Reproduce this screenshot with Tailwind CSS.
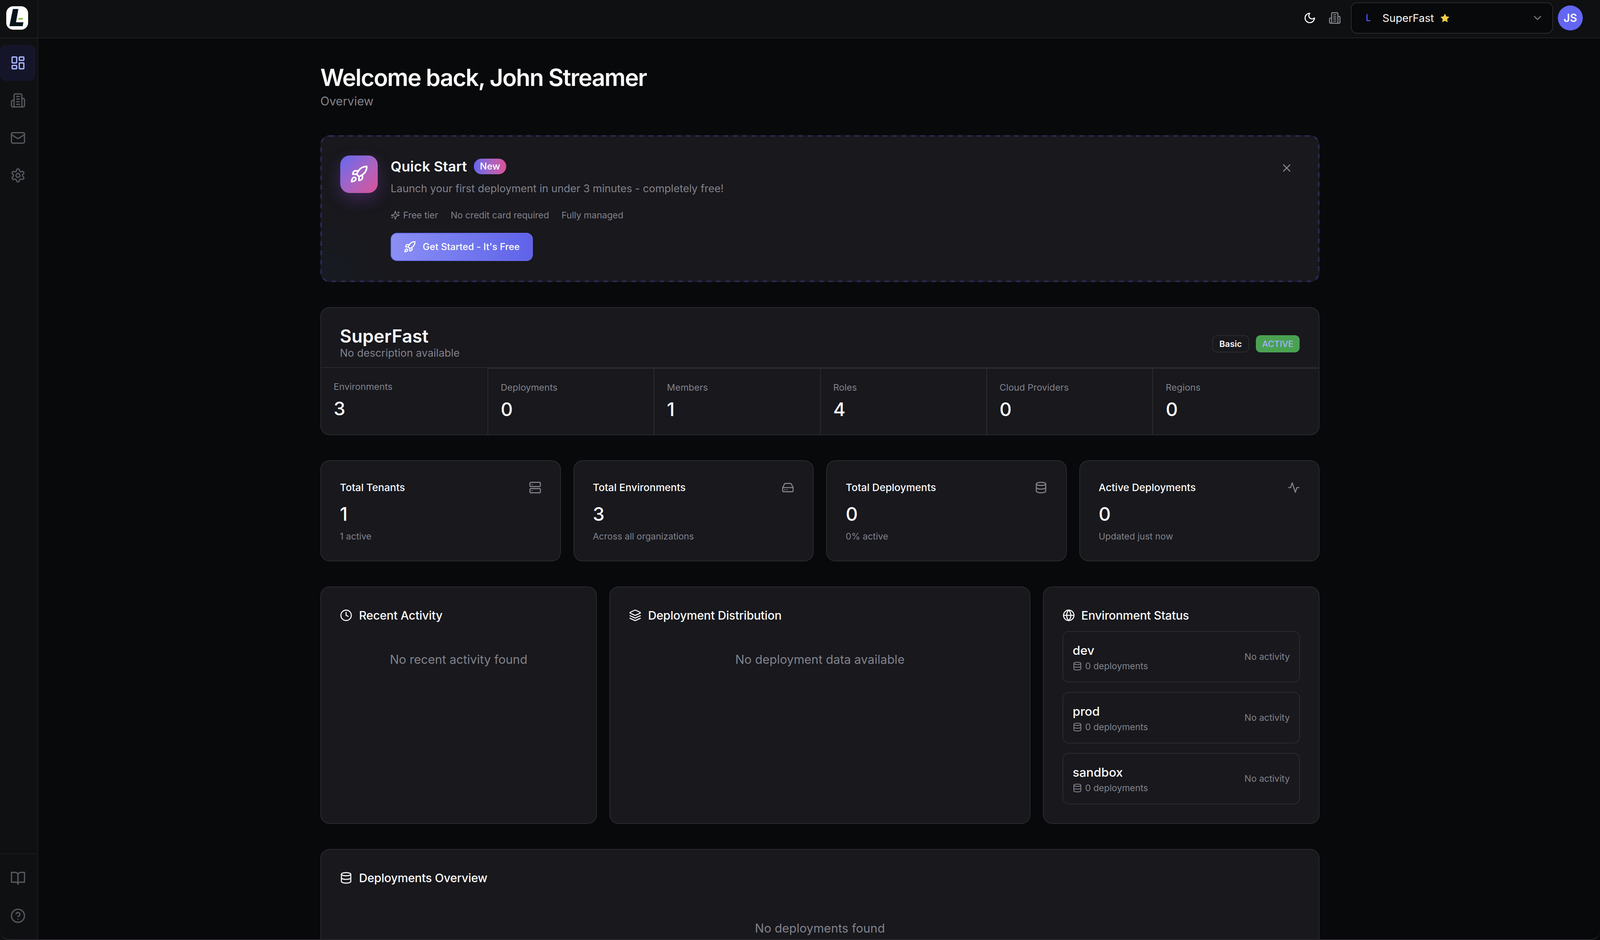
<!doctype html>
<html lang="en">
<head>
<meta charset="utf-8">
<title>Overview</title>
<script src="https://cdn.jsdelivr.net/npm/@tailwindcss/browser@4"></script>
</head>
<body class="bg-[#08090b] text-[#fafafa] [font-family:Inter,sans-serif] overflow-hidden">
<div class="relative h-screen w-screen flex flex-col overflow-hidden">

  <!-- top bar -->
  <header class="h-[98px] shrink-0 flex bg-[#0f1012] border-b-2 border-[#212125]">
    <div class="w-[98px] shrink-0 border-r-2 border-[#1c1c20] flex pl-[16px] pt-[16px]">
      <svg class="w-[56px] h-[60px]" viewBox="0 0 56 60"><rect width="56" height="60" rx="18" fill="#fff"/><polygon points="17,7 31,7 25,41 44,41 42,51 8,51" fill="#06141b"/><rect x="31" y="30" width="12" height="4.5" rx="2" fill="#8bc34a"/></svg>
    </div>
    <div class="flex-1 flex items-center justify-end pr-[44px] pb-[4px]">
      <svg class="w-[32px] h-[32px] text-white" viewBox="0 0 24 24" fill="none" stroke="currentColor" stroke-width="2" stroke-linecap="round" stroke-linejoin="round"><path d="M12 3a6 6 0 0 0 9 9 9 9 0 1 1-9-9Z"/></svg>
      <svg class="ml-[32px] w-[32px] h-[32px] text-[#85858e]" viewBox="0 0 24 24" fill="none" stroke="currentColor" stroke-width="2" stroke-linecap="round" stroke-linejoin="round"><path d="M6 22V4a2 2 0 0 1 2-2h8a2 2 0 0 1 2 2v18Z"/><path d="M6 12H4a2 2 0 0 0-2 2v6a2 2 0 0 0 2 2h2"/><path d="M18 9h2a2 2 0 0 1 2 2v9a2 2 0 0 1-2 2h-2"/><path d="M10 6h4"/><path d="M10 10h4"/><path d="M10 14h4"/><path d="M10 18h4"/></svg>
      <div class="ml-[25px] w-[518px] h-[80px] flex items-center rounded-[16px] border-2 border-[#2a2a2f] bg-[#08090b] pl-[27px] pr-[22px]">
        <span class="w-[32px] text-center text-[24px] leading-[32px] text-[#6366f1]">L</span>
        <span class="ml-[20px] text-[27.5px] leading-[40px] text-[#fafafa]">SuperFast</span>
        <svg class="ml-[16px] w-[24px] h-[24px] text-[#f5cf47]" viewBox="0 0 24 24" fill="currentColor"><path d="M11.5 1.8a.6.6 0 0 1 1 0l3 6.3 6.9 1a.6.6 0 0 1 .3 1l-5 4.9 1.2 6.9a.6.6 0 0 1-.8.6L12 19.2l-6.1 3.3a.6.6 0 0 1-.8-.6l1.2-6.9-5-4.9a.6.6 0 0 1 .3-1l6.9-1z"/></svg>
        <svg class="ml-auto w-[32px] h-[32px] text-[#77777f]" viewBox="0 0 24 24" fill="none" stroke="currentColor" stroke-width="2" stroke-linecap="round" stroke-linejoin="round"><path d="m6 9 6 6 6-6"/></svg>
      </div>
      <div class="ml-[12px] w-[64px] h-[64px] rounded-full bg-[#6366f1] flex items-center justify-center text-[28px] font-semibold text-white">JS</div>
    </div>
  </header>

  <div class="flex-1 min-h-0 flex">
    <!-- side rail -->
    <aside class="w-[98px] shrink-0 bg-[#0f1012] border-r-2 border-[#1c1c20] flex flex-col justify-between text-[#55555c]">
      <nav class="pt-[17px] pr-[5px] flex flex-col gap-[4px]">
        <a class="h-[92px] rounded-[16px] bg-[#15152a] flex items-center justify-center text-[#a5b4fc]">
          <svg class="w-[40px] h-[40px]" viewBox="0 0 24 24" fill="none" stroke="currentColor" stroke-width="2" stroke-linecap="round" stroke-linejoin="round"><rect x="3" y="3" width="7" height="9" rx="1"/><rect x="14" y="3" width="7" height="5" rx="1"/><rect x="14" y="12" width="7" height="9" rx="1"/><rect x="3" y="16" width="7" height="5" rx="1"/></svg>
        </a>
        <a class="h-[92px] flex items-center justify-center">
          <svg class="w-[40px] h-[40px]" viewBox="0 0 24 24" fill="none" stroke="currentColor" stroke-width="2" stroke-linecap="round" stroke-linejoin="round"><path d="M6 22V4a2 2 0 0 1 2-2h8a2 2 0 0 1 2 2v18Z"/><path d="M6 12H4a2 2 0 0 0-2 2v6a2 2 0 0 0 2 2h2"/><path d="M18 9h2a2 2 0 0 1 2 2v9a2 2 0 0 1-2 2h-2"/><path d="M10 6h4"/><path d="M10 10h4"/><path d="M10 14h4"/><path d="M10 18h4"/></svg>
        </a>
        <a class="h-[92px] flex items-center justify-center">
          <svg class="w-[40px] h-[40px]" viewBox="0 0 24 24" fill="none" stroke="currentColor" stroke-width="2" stroke-linecap="round" stroke-linejoin="round"><rect x="2" y="4" width="20" height="16" rx="2"/><path d="m22 7-8.97 5.7a1.94 1.94 0 0 1-2.06 0L2 7"/></svg>
        </a>
        <a class="h-[92px] flex items-center justify-center">
          <svg class="w-[40px] h-[40px]" viewBox="0 0 24 24" fill="none" stroke="currentColor" stroke-width="2" stroke-linecap="round" stroke-linejoin="round"><path d="M12.22 2h-.44a2 2 0 0 0-2 2v.18a2 2 0 0 1-1 1.73l-.43.25a2 2 0 0 1-2 0l-.15-.08a2 2 0 0 0-2.73.73l-.22.38a2 2 0 0 0 .73 2.73l.15.1a2 2 0 0 1 1 1.72v.51a2 2 0 0 1-1 1.74l-.15.09a2 2 0 0 0-.73 2.73l.22.38a2 2 0 0 0 2.73.73l.15-.08a2 2 0 0 1 2 0l.43.25a2 2 0 0 1 1 1.73V20a2 2 0 0 0 2 2h.44a2 2 0 0 0 2-2v-.18a2 2 0 0 1 1-1.73l.43-.25a2 2 0 0 1 2 0l.15.08a2 2 0 0 0 2.73-.73l.22-.39a2 2 0 0 0-.73-2.73l-.15-.08a2 2 0 0 1-1-1.74v-.5a2 2 0 0 1 1-1.74l.15-.09a2 2 0 0 0 .73-2.73l-.22-.38a2 2 0 0 0-2.73-.73l-.15.08a2 2 0 0 1-2 0l-.43-.25a2 2 0 0 1-1-1.73V4a2 2 0 0 0-2-2z"/><circle cx="12" cy="12" r="3"/></svg>
        </a>
      </nav>
      <div class="border-t-2 border-[#1c1c20] py-[16px] pr-[5px] flex flex-col gap-[4px]">
        <a class="h-[92px] flex items-center justify-center">
          <svg class="w-[40px] h-[40px]" viewBox="0 0 24 24" fill="none" stroke="currentColor" stroke-width="2" stroke-linecap="round" stroke-linejoin="round"><path d="M2 3h6a4 4 0 0 1 4 4v14a3 3 0 0 0-3-3H2z"/><path d="M22 3h-6a4 4 0 0 0-4 4v14a3 3 0 0 1 3-3h7z"/></svg>
        </a>
        <a class="h-[92px] flex items-center justify-center">
          <svg class="w-[40px] h-[40px]" viewBox="0 0 24 24" fill="none" stroke="currentColor" stroke-width="2" stroke-linecap="round" stroke-linejoin="round"><circle cx="12" cy="12" r="10"/><path d="M9.09 9a3 3 0 0 1 5.83 1c0 2-3 3-3 3"/><path d="M12 17h.01"/></svg>
        </a>
      </div>
    </aside>

    <!-- main -->
    <main class="flex-1 min-w-0 overflow-hidden pl-[4px]">
      <div class="w-[2558px] mx-auto pt-[64px] flex flex-col gap-[64px]">
        <div>
          <h1 class="text-[60px] leading-[72px] font-semibold tracking-[-1.9px] text-[#fafafa]">Welcome back, John Streamer</h1>
          <p class="mt-[2px] text-[30.5px] leading-[46px] text-[#82828c]">Overview</p>
        </div>

        <!-- quick start -->
        <section class="relative h-[376px] rounded-[24px] bg-[#18181d] bg-[radial-gradient(circle_at_0%_100%,rgba(20,32,44,0.35),transparent_170px)] py-[52px] pl-[51px] pr-[52px] flex gap-[33px]">
          <svg class="absolute inset-0 w-[2558px] h-[376px] pointer-events-none" viewBox="0 0 2558 376" fill="none"><rect x="2" y="2" width="2554" height="372" rx="22" stroke="#2b2a55" stroke-width="4" stroke-dasharray="12 12"/></svg>
          <div class="w-[96px] h-[96px] shrink-0 rounded-[24px] bg-linear-to-br from-[#6366f1] to-[#db4f95] shadow-[0_16px_40px_rgba(168,85,247,0.25)] flex items-center justify-center text-white">
            <svg class="w-[48px] h-[48px]" viewBox="0 0 24 24" fill="none" stroke="currentColor" stroke-width="2" stroke-linecap="round" stroke-linejoin="round"><path d="M4.5 16.5c-1.5 1.26-2 5-2 5s3.74-.5 5-2c.71-.84.7-2.13-.09-2.91a2.18 2.18 0 0 0-2.91-.09z"/><path d="m12 15-3-3a22 22 0 0 1 2-3.95A12.88 12.88 0 0 1 22 2c0 2.72-.78 7.5-6 11a22.35 22.35 0 0 1-4 2z"/><path d="M9 12H4s.55-3.03 2-4c1.62-1.08 5 0 5 0"/><path d="M12 15v5s3.03-.55 4-2c1.08-1.62 0-5 0-5"/></svg>
          </div>
          <div class="flex-1 min-w-0">
            <div class="flex items-center gap-[17px] h-[56px]">
              <h2 class="text-[36px] leading-[56px] font-semibold tracking-[0.1px] text-[#fafafa]">Quick Start</h2>
              <span class="h-[40px] px-[16px] rounded-full bg-linear-to-r from-[#6366f1] to-[#db4f95] text-[24px] leading-[40px] font-medium text-white">New</span>
            </div>
            <p class="mt-[9px] text-[27px] leading-[40px] text-[#82828c]">Launch your first deployment in under 3 minutes - completely free!</p>
            <div class="mt-[32px] flex items-center gap-[32px] text-[23px] leading-[32px] text-[#82828c]">
              <span class="flex items-center gap-[8px]">
                <svg class="w-[24px] h-[24px]" viewBox="0 0 24 24" fill="none" stroke="currentColor" stroke-width="2" stroke-linecap="round" stroke-linejoin="round"><path d="M9.937 15.5A2 2 0 0 0 8.5 14.063l-6.135-1.582a.5.5 0 0 1 0-.962L8.5 9.936A2 2 0 0 0 9.937 8.5l1.582-6.135a.5.5 0 0 1 .963 0L14.063 8.5A2 2 0 0 0 15.5 9.937l6.135 1.581a.5.5 0 0 1 0 .964L15.5 14.063a2 2 0 0 0-1.437 1.437l-1.582 6.135a.5.5 0 0 1-.963 0z"/><path d="M20 3v4"/><path d="M22 5h-4"/><path d="M4 17v2"/><path d="M5 18H3"/></svg>
                Free tier
              </span>
              <span>No credit card required</span>
              <span>Fully managed</span>
            </div>
            <button class="mt-[29px] w-[364px] h-[72px] rounded-[16px] border-2 border-[#6a6df0] bg-linear-to-r from-[#8b8ff5] to-[#5f62e8] flex items-center gap-[17px] pl-[31px] text-[24px] tracking-[0.07px] font-medium text-white">
              <svg class="w-[32px] h-[32px]" viewBox="0 0 24 24" fill="none" stroke="currentColor" stroke-width="2" stroke-linecap="round" stroke-linejoin="round"><path d="M4.5 16.5c-1.5 1.26-2 5-2 5s3.74-.5 5-2c.71-.84.7-2.13-.09-2.91a2.18 2.18 0 0 0-2.91-.09z"/><path d="m12 15-3-3a22 22 0 0 1 2-3.95A12.88 12.88 0 0 1 22 2c0 2.72-.78 7.5-6 11a22.35 22.35 0 0 1-4 2z"/><path d="M9 12H4s.55-3.03 2-4c1.62-1.08 5 0 5 0"/><path d="M12 15v5s3.03-.55 4-2c1.08-1.62 0-5 0-5"/></svg>
              Get Started - It's Free
            </button>
          </div>
          <button class="w-[64px] h-[64px] shrink-0 flex items-center justify-center text-[#85858e]">
            <svg class="w-[32px] h-[32px]" viewBox="0 0 24 24" fill="none" stroke="currentColor" stroke-width="2" stroke-linecap="round" stroke-linejoin="round"><path d="M18 6 6 18"/><path d="m6 6 12 12"/></svg>
          </button>
        </section>

        <!-- organization -->
        <section class="rounded-[24px] border-2 border-[#2a2a2f] bg-[#18181d] overflow-hidden">
          <div class="pt-[48px] pl-[48px] pr-[49px] pb-[16px] flex items-center justify-between border-b-2 border-[#2a2a2f]">
            <div>
              <h2 class="text-[46px] leading-[48px] font-semibold text-[#fafafa]">SuperFast</h2>
              <p class="text-[27px] leading-[40px] text-[#82828c]">No description available</p>
            </div>
            <div class="flex items-center gap-[17px]">
              <span class="w-[95px] h-[44px] text-center rounded-[12px] border-2 border-[#2a2a2f] text-[22px] leading-[40px] font-semibold text-[#fafafa]">Basic</span>
              <span class="w-[112px] h-[44px] text-center rounded-[12px] bg-[#4ba152] text-[22px] leading-[44px] font-medium text-[#a5b4fc]">ACTIVE</span>
            </div>
          </div>
          <div class="grid grid-cols-6">
            <div class="p-[32px]">
              <div class="text-[23.5px] leading-[32px] text-[#82828c]">Environments</div>
              <div class="mt-[8px] text-[48px] leading-[64px] font-[550] text-[#fafafa]">3</div>
            </div>
            <div class="p-[32px] border-l-2 border-t-2 border-[#2a2a2f]">
              <div class="text-[23.5px] leading-[32px] text-[#82828c]">Deployments</div>
              <div class="mt-[8px] text-[48px] leading-[64px] font-[550] text-[#fafafa]">0</div>
            </div>
            <div class="p-[32px] border-l-2 border-t-2 border-[#2a2a2f]">
              <div class="text-[23.5px] leading-[32px] text-[#82828c]">Members</div>
              <div class="mt-[8px] text-[48px] leading-[64px] font-[550] text-[#fafafa]">1</div>
            </div>
            <div class="p-[32px] border-l-2 border-t-2 border-[#2a2a2f]">
              <div class="text-[23.5px] leading-[32px] text-[#82828c]">Roles</div>
              <div class="mt-[8px] text-[48px] leading-[64px] font-[550] text-[#fafafa]">4</div>
            </div>
            <div class="p-[32px] border-l-2 border-t-2 border-[#2a2a2f]">
              <div class="text-[23.5px] leading-[32px] text-[#82828c]">Cloud Providers</div>
              <div class="mt-[8px] text-[48px] leading-[64px] font-[550] text-[#fafafa]">0</div>
            </div>
            <div class="p-[32px] border-l-2 border-t-2 border-[#2a2a2f]">
              <div class="text-[23.5px] leading-[32px] text-[#82828c]">Regions</div>
              <div class="mt-[8px] text-[48px] leading-[64px] font-[550] text-[#fafafa]">0</div>
            </div>
          </div>
        </section>

        <!-- totals -->
        <section class="grid grid-cols-4 gap-[32px]">
          <div class="rounded-[24px] border-2 border-[#2a2a2f] bg-[#18181d] p-[48px] pb-[46px]">
            <div class="flex items-center justify-between h-[40px]">
              <span class="text-[26px] leading-[40px] font-medium text-[#fafafa]">Total Tenants</span>
              <svg class="w-[32px] h-[32px] text-[#85858e]" viewBox="0 0 24 24" fill="none" stroke="currentColor" stroke-width="2" stroke-linecap="round" stroke-linejoin="round"><rect x="2" y="2" width="20" height="8" rx="2"/><rect x="2" y="14" width="20" height="8" rx="2"/><line x1="6" x2="6.01" y1="6" y2="6"/><line x1="6" x2="6.01" y1="18" y2="18"/></svg>
            </div>
            <div class="mt-[16px] text-[48px] leading-[64px] font-[550] text-[#fafafa]">1</div>
            <div class="mt-[9px] text-[23px] leading-[32px] text-[#82828c]">1 active</div>
          </div>
          <div class="rounded-[24px] border-2 border-[#2a2a2f] bg-[#18181d] p-[48px] pb-[46px]">
            <div class="flex items-center justify-between h-[40px]">
              <span class="text-[26px] leading-[40px] font-medium text-[#fafafa]">Total Environments</span>
              <svg class="w-[32px] h-[32px] text-[#85858e]" viewBox="0 0 24 24" fill="none" stroke="currentColor" stroke-width="2" stroke-linecap="round" stroke-linejoin="round"><line x1="22" x2="2" y1="12" y2="12"/><path d="M5.45 5.11 2 12v6a2 2 0 0 0 2 2h16a2 2 0 0 0 2-2v-6l-3.45-6.89A2 2 0 0 0 16.76 4H7.24a2 2 0 0 0-1.79 1.11z"/><line x1="6" x2="6.01" y1="16" y2="16"/><line x1="10" x2="10.01" y1="16" y2="16"/></svg>
            </div>
            <div class="mt-[16px] text-[48px] leading-[64px] font-[550] text-[#fafafa]">3</div>
            <div class="mt-[9px] text-[23px] leading-[32px] text-[#82828c]">Across all organizations</div>
          </div>
          <div class="rounded-[24px] border-2 border-[#2a2a2f] bg-[#18181d] p-[48px] pb-[46px]">
            <div class="flex items-center justify-between h-[40px]">
              <span class="text-[26px] leading-[40px] font-medium text-[#fafafa]">Total Deployments</span>
              <svg class="w-[32px] h-[32px] text-[#85858e]" viewBox="0 0 24 24" fill="none" stroke="currentColor" stroke-width="2" stroke-linecap="round" stroke-linejoin="round"><ellipse cx="12" cy="5" rx="9" ry="3"/><path d="M3 5V19A9 3 0 0 0 21 19V5"/><path d="M3 12A9 3 0 0 0 21 12"/></svg>
            </div>
            <div class="mt-[16px] text-[48px] leading-[64px] font-[550] text-[#fafafa]">0</div>
            <div class="mt-[9px] text-[23px] leading-[32px] text-[#82828c]">0% active</div>
          </div>
          <div class="rounded-[24px] border-2 border-[#2a2a2f] bg-[#18181d] p-[48px] pb-[46px]">
            <div class="flex items-center justify-between h-[40px]">
              <span class="text-[26px] leading-[40px] font-medium text-[#fafafa]">Active Deployments</span>
              <svg class="w-[32px] h-[32px] text-[#85858e]" viewBox="0 0 24 24" fill="none" stroke="currentColor" stroke-width="2" stroke-linecap="round" stroke-linejoin="round"><path d="M22 12h-4l-3 9L9 3l-3 9H2"/></svg>
            </div>
            <div class="mt-[16px] text-[48px] leading-[64px] font-[550] text-[#fafafa]">0</div>
            <div class="mt-[9px] text-[23px] leading-[32px] text-[#82828c]">Updated just now</div>
          </div>
        </section>

        <!-- activity / distribution / status -->
        <section class="grid grid-cols-7 gap-[32px]">
          <div class="col-span-2 rounded-[24px] border-2 border-[#2a2a2f] bg-[#18181d] p-[48px]">
            <div class="flex items-center gap-[17px] h-[48px]">
              <svg class="w-[32px] h-[32px] text-[#fafafa]" viewBox="0 0 24 24" fill="none" stroke="currentColor" stroke-width="2" stroke-linecap="round" stroke-linejoin="round"><circle cx="12" cy="12" r="10"/><polyline points="12 6 12 12 16 14"/></svg>
              <h3 class="text-[30px] leading-[48px] tracking-[-0.2px] font-medium text-[#fafafa]">Recent Activity</h3>
            </div>
            <p class="mt-[65px] text-center text-[31px] leading-[48px] text-[#82828c]">No recent activity found</p>
          </div>
          <div class="col-span-3 rounded-[24px] border-2 border-[#2a2a2f] bg-[#18181d] p-[48px]">
            <div class="flex items-center gap-[17px] h-[48px]">
              <svg class="w-[32px] h-[32px] text-[#fafafa]" viewBox="0 0 24 24" fill="none" stroke="currentColor" stroke-width="2" stroke-linecap="round" stroke-linejoin="round"><path d="m12.83 2.18a2 2 0 0 0-1.66 0L2.6 6.08a1 1 0 0 0 0 1.83l8.58 3.91a2 2 0 0 0 1.66 0l8.58-3.9a1 1 0 0 0 0-1.83Z"/><path d="m22 17.65-9.17 4.16a2 2 0 0 1-1.66 0L2 17.65"/><path d="m22 12.65-9.17 4.16a2 2 0 0 1-1.66 0L2 12.65"/></svg>
              <h3 class="text-[30px] leading-[48px] tracking-[-0.2px] font-medium text-[#fafafa]">Deployment Distribution</h3>
            </div>
            <p class="mt-[65px] text-center text-[31px] leading-[48px] text-[#82828c]">No deployment data available</p>
          </div>
          <div class="col-span-2 rounded-[24px] border-2 border-[#2a2a2f] bg-[#18181d] p-[48px]">
            <div class="flex items-center gap-[16px] h-[48px]">
              <svg class="w-[32px] h-[32px] text-[#fafafa]" viewBox="0 0 24 24" fill="none" stroke="currentColor" stroke-width="2" stroke-linecap="round" stroke-linejoin="round"><circle cx="12" cy="12" r="10"/><path d="M12 2a14.5 14.5 0 0 0 0 20 14.5 14.5 0 0 0 0-20"/><path d="M2 12h20"/></svg>
              <h3 class="text-[30px] leading-[48px] tracking-[-0.2px] font-medium text-[#fafafa]">Environment Status</h3>
            </div>
            <div class="mt-[16px] flex flex-col gap-[24px]">
              <div class="rounded-[16px] border-2 border-[#2a2a2f] p-[24px] flex items-center justify-between">
                <div>
                  <div class="text-[31.5px] leading-[48px] font-medium text-[#fafafa]">dev</div>
                  <div class="flex items-center gap-[8px] text-[23px] leading-[32px] text-[#82828c]">
                    <svg class="w-[24px] h-[24px]" viewBox="0 0 24 24" fill="none" stroke="currentColor" stroke-width="2" stroke-linecap="round" stroke-linejoin="round"><ellipse cx="12" cy="5" rx="9" ry="3"/><path d="M3 5V19A9 3 0 0 0 21 19V5"/><path d="M3 12A9 3 0 0 0 21 12"/></svg>
                    0 deployments
                  </div>
                </div>
                <span class="text-[23px] leading-[32px] text-[#82828c]">No activity</span>
              </div>
              <div class="rounded-[16px] border-2 border-[#2a2a2f] p-[24px] flex items-center justify-between">
                <div>
                  <div class="text-[31.5px] leading-[48px] font-medium text-[#fafafa]">prod</div>
                  <div class="flex items-center gap-[8px] text-[23px] leading-[32px] text-[#82828c]">
                    <svg class="w-[24px] h-[24px]" viewBox="0 0 24 24" fill="none" stroke="currentColor" stroke-width="2" stroke-linecap="round" stroke-linejoin="round"><ellipse cx="12" cy="5" rx="9" ry="3"/><path d="M3 5V19A9 3 0 0 0 21 19V5"/><path d="M3 12A9 3 0 0 0 21 12"/></svg>
                    0 deployments
                  </div>
                </div>
                <span class="text-[23px] leading-[32px] text-[#82828c]">No activity</span>
              </div>
              <div class="rounded-[16px] border-2 border-[#2a2a2f] p-[24px] flex items-center justify-between">
                <div>
                  <div class="text-[31.5px] leading-[48px] font-medium text-[#fafafa]">sandbox</div>
                  <div class="flex items-center gap-[8px] text-[23px] leading-[32px] text-[#82828c]">
                    <svg class="w-[24px] h-[24px]" viewBox="0 0 24 24" fill="none" stroke="currentColor" stroke-width="2" stroke-linecap="round" stroke-linejoin="round"><ellipse cx="12" cy="5" rx="9" ry="3"/><path d="M3 5V19A9 3 0 0 0 21 19V5"/><path d="M3 12A9 3 0 0 0 21 12"/></svg>
                    0 deployments
                  </div>
                </div>
                <span class="text-[23px] leading-[32px] text-[#82828c]">No activity</span>
              </div>
            </div>
          </div>
        </section>

        <!-- deployments overview -->
        <section class="rounded-[24px] border-2 border-[#2a2a2f] bg-[#18181d] p-[48px]">
          <div class="flex items-center gap-[17px] h-[48px]">
            <svg class="w-[32px] h-[32px] text-[#fafafa]" viewBox="0 0 24 24" fill="none" stroke="currentColor" stroke-width="2" stroke-linecap="round" stroke-linejoin="round"><ellipse cx="12" cy="5" rx="9" ry="3"/><path d="M3 5V19A9 3 0 0 0 21 19V5"/><path d="M3 12A9 3 0 0 0 21 12"/></svg>
            <h3 class="text-[30px] leading-[48px] tracking-[-0.2px] font-medium text-[#fafafa]">Deployments Overview</h3>
          </div>
          <p class="mt-[81px] text-center text-[31px] leading-[48px] text-[#82828c]">No deployments found</p>
        </section>
      </div>
    </main>
  </div>

  <!-- window edge -->
  <div class="absolute inset-x-0 bottom-0 h-[60px] pointer-events-none border-b-2 border-[#2a2a2f] rounded-b-[24px]"></div>
</div>
</body>
</html>
